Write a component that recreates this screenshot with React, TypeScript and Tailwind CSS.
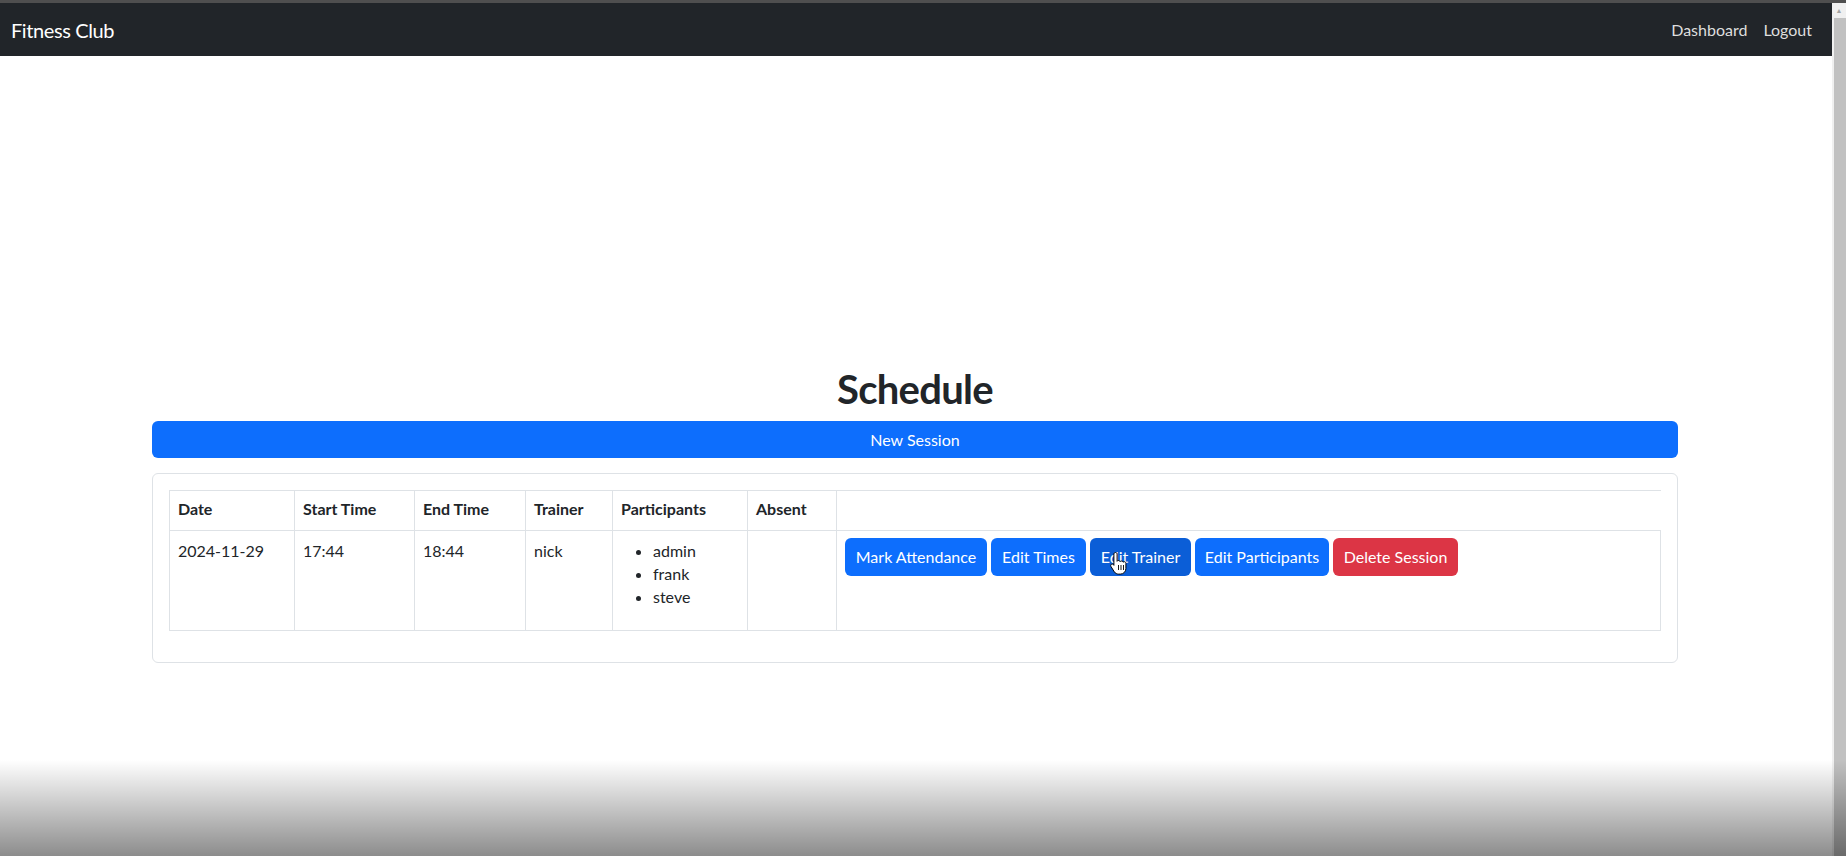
import React from "react";

function HandCursor() {
  return (
    <svg
      className="absolute left-[1110px] top-[551px] pointer-events-none"
      width="18"
      height="24"
      viewBox="0 0 18 24"
    >
      <path
        d="M5.5 1.5c.9 0 1.6.7 1.6 1.6v7.2c.3-.5.8-.8 1.4-.8.8 0 1.4.5 1.6 1.2.3-.4.8-.7 1.4-.7.8 0 1.4.5 1.6 1.2.3-.3.7-.5 1.2-.5.9 0 1.6.7 1.6 1.6v5.2c0 3.1-2.4 5.6-5.5 5.6H8.6c-1.7 0-3.2-.8-4.2-2.1L1 15.6c-.5-.7-.4-1.7.3-2.2.7-.5 1.6-.4 2.1.2l.5.7V3.1c0-.9.7-1.6 1.6-1.6z"
        fill="#fff"
        stroke="#000"
        strokeWidth="1"
      />
      <path d="M8.5 14v5M11 14v5M13.5 14v5" stroke="#000" strokeWidth="0.9" />
    </svg>
  );
}

export default function App() {
  const cell = "border-x border-[#dee2e6] px-2 py-2 align-top text-left";
  return (
    <div className="relative w-[1846px] h-[856px] overflow-hidden bg-white font-['Segoe_UI',Lato,Roboto,sans-serif] text-[16px] text-[#212529]">
      <div className="h-[3px] bg-[#4f4f4f]" />
      <div className="flex h-[853px]">
        <div className="flex-1 flex flex-col">
          <nav className="h-[53px] bg-[#212529] flex items-center justify-between pl-[11px] pr-[12px]">
            <span className="text-[20px] text-white leading-[30px] tracking-[-0.4px]">Fitness Club</span>
            <div className="flex">
              <span className="px-[8px] text-[#dedede]">Dashboard</span>
              <span className="px-[8px] text-[#dedede]">Logout</span>
            </div>
          </nav>
          <main className="pt-[309px] pl-[152px] pr-[154px]">
            <h1 className="text-[40px] leading-[48px] font-bold text-center mb-[8px] tracking-[-0.7px]">Schedule</h1>
            <button className="w-full h-[37px] rounded-[6px] bg-[#0d6efd] text-white text-[16px]">
              New Session
            </button>
            <div className="mt-[15px] border border-[#dee2e6] rounded-[6px] p-[16px]">
              <table className="w-full border-collapse table-fixed mb-[15px]">
                <colgroup>
                  <col className="w-[125px]" />
                  <col className="w-[120px]" />
                  <col className="w-[111px]" />
                  <col className="w-[87px]" />
                  <col className="w-[135px]" />
                  <col className="w-[89px]" />
                  <col />
                </colgroup>
                <thead>
                  <tr className="border-y border-[#dee2e6] h-[40px]">
                    <th className={cell + " font-bold leading-[22px] pt-[7px] pb-[9px]"}>Date</th>
                    <th className={cell + " font-bold leading-[22px] pt-[7px] pb-[9px]"}>Start Time</th>
                    <th className={cell + " font-bold leading-[22px] pt-[7px] pb-[9px]"}>End Time</th>
                    <th className={cell + " font-bold leading-[22px] pt-[7px] pb-[9px]"}>Trainer</th>
                    <th className={cell + " font-bold leading-[22px] pt-[7px] pb-[9px]"}>Participants</th>
                    <th className={cell + " font-bold leading-[22px] pt-[7px] pb-[9px]"}>Absent</th>
                    <th className="border-l border-[#dee2e6] px-2 py-2" />
                  </tr>
                </thead>
                <tbody>
                  <tr className="border-b border-[#dee2e6]">
                    <td className={cell + " leading-[23px]"}>2024-11-29</td>
                    <td className={cell + " leading-[23px]"}>17:44</td>
                    <td className={cell + " leading-[23px]"}>18:44</td>
                    <td className={cell + " leading-[23px]"}>nick</td>
                    <td className={cell}>
                      <ul className="list-disc pl-[32px] mb-[14px] leading-[23px]">
                        <li>admin</li>
                        <li>frank</li>
                        <li>steve</li>
                      </ul>
                    </td>
                    <td className={cell}></td>
                    <td className={cell + " pt-[7px]"}>
                      <div className="flex gap-[4px]">
                        <button className="w-[142px] h-[38px] rounded-[6px] bg-[#0d6efd] text-white whitespace-nowrap">
                          Mark Attendance
                        </button>
                        <button className="w-[95px] h-[38px] rounded-[6px] bg-[#0d6efd] text-white whitespace-nowrap">
                          Edit Times
                        </button>
                        <button className="w-[101px] h-[38px] rounded-[6px] bg-[#0b5ed7] text-white whitespace-nowrap">
                          Edit Trainer
                        </button>
                        <button className="w-[134px] h-[38px] rounded-[6px] bg-[#0d6efd] text-white whitespace-nowrap">
                          Edit Participants
                        </button>
                        <button className="w-[125px] h-[38px] rounded-[6px] bg-[#dc3545] text-white whitespace-nowrap">
                          Delete Session
                        </button>
                      </div>
                    </td>
                  </tr>
                </tbody>
              </table>
            </div>
          </main>
        </div>
        <div className="w-[14px] bg-[#f0f0f0] flex flex-col">
          <div className="h-[15px] flex items-center justify-center text-[7px] text-[#a3a3a3] leading-none">▲</div>
          <div className="flex-1 ml-[2px] bg-[#c1c1c1]" />
        </div>
      </div>
      <HandCursor />
      <div className="absolute left-0 right-0 bottom-0 h-[96px] bg-linear-to-b from-white/0 to-black/45 pointer-events-none" />
    </div>
  );
}
